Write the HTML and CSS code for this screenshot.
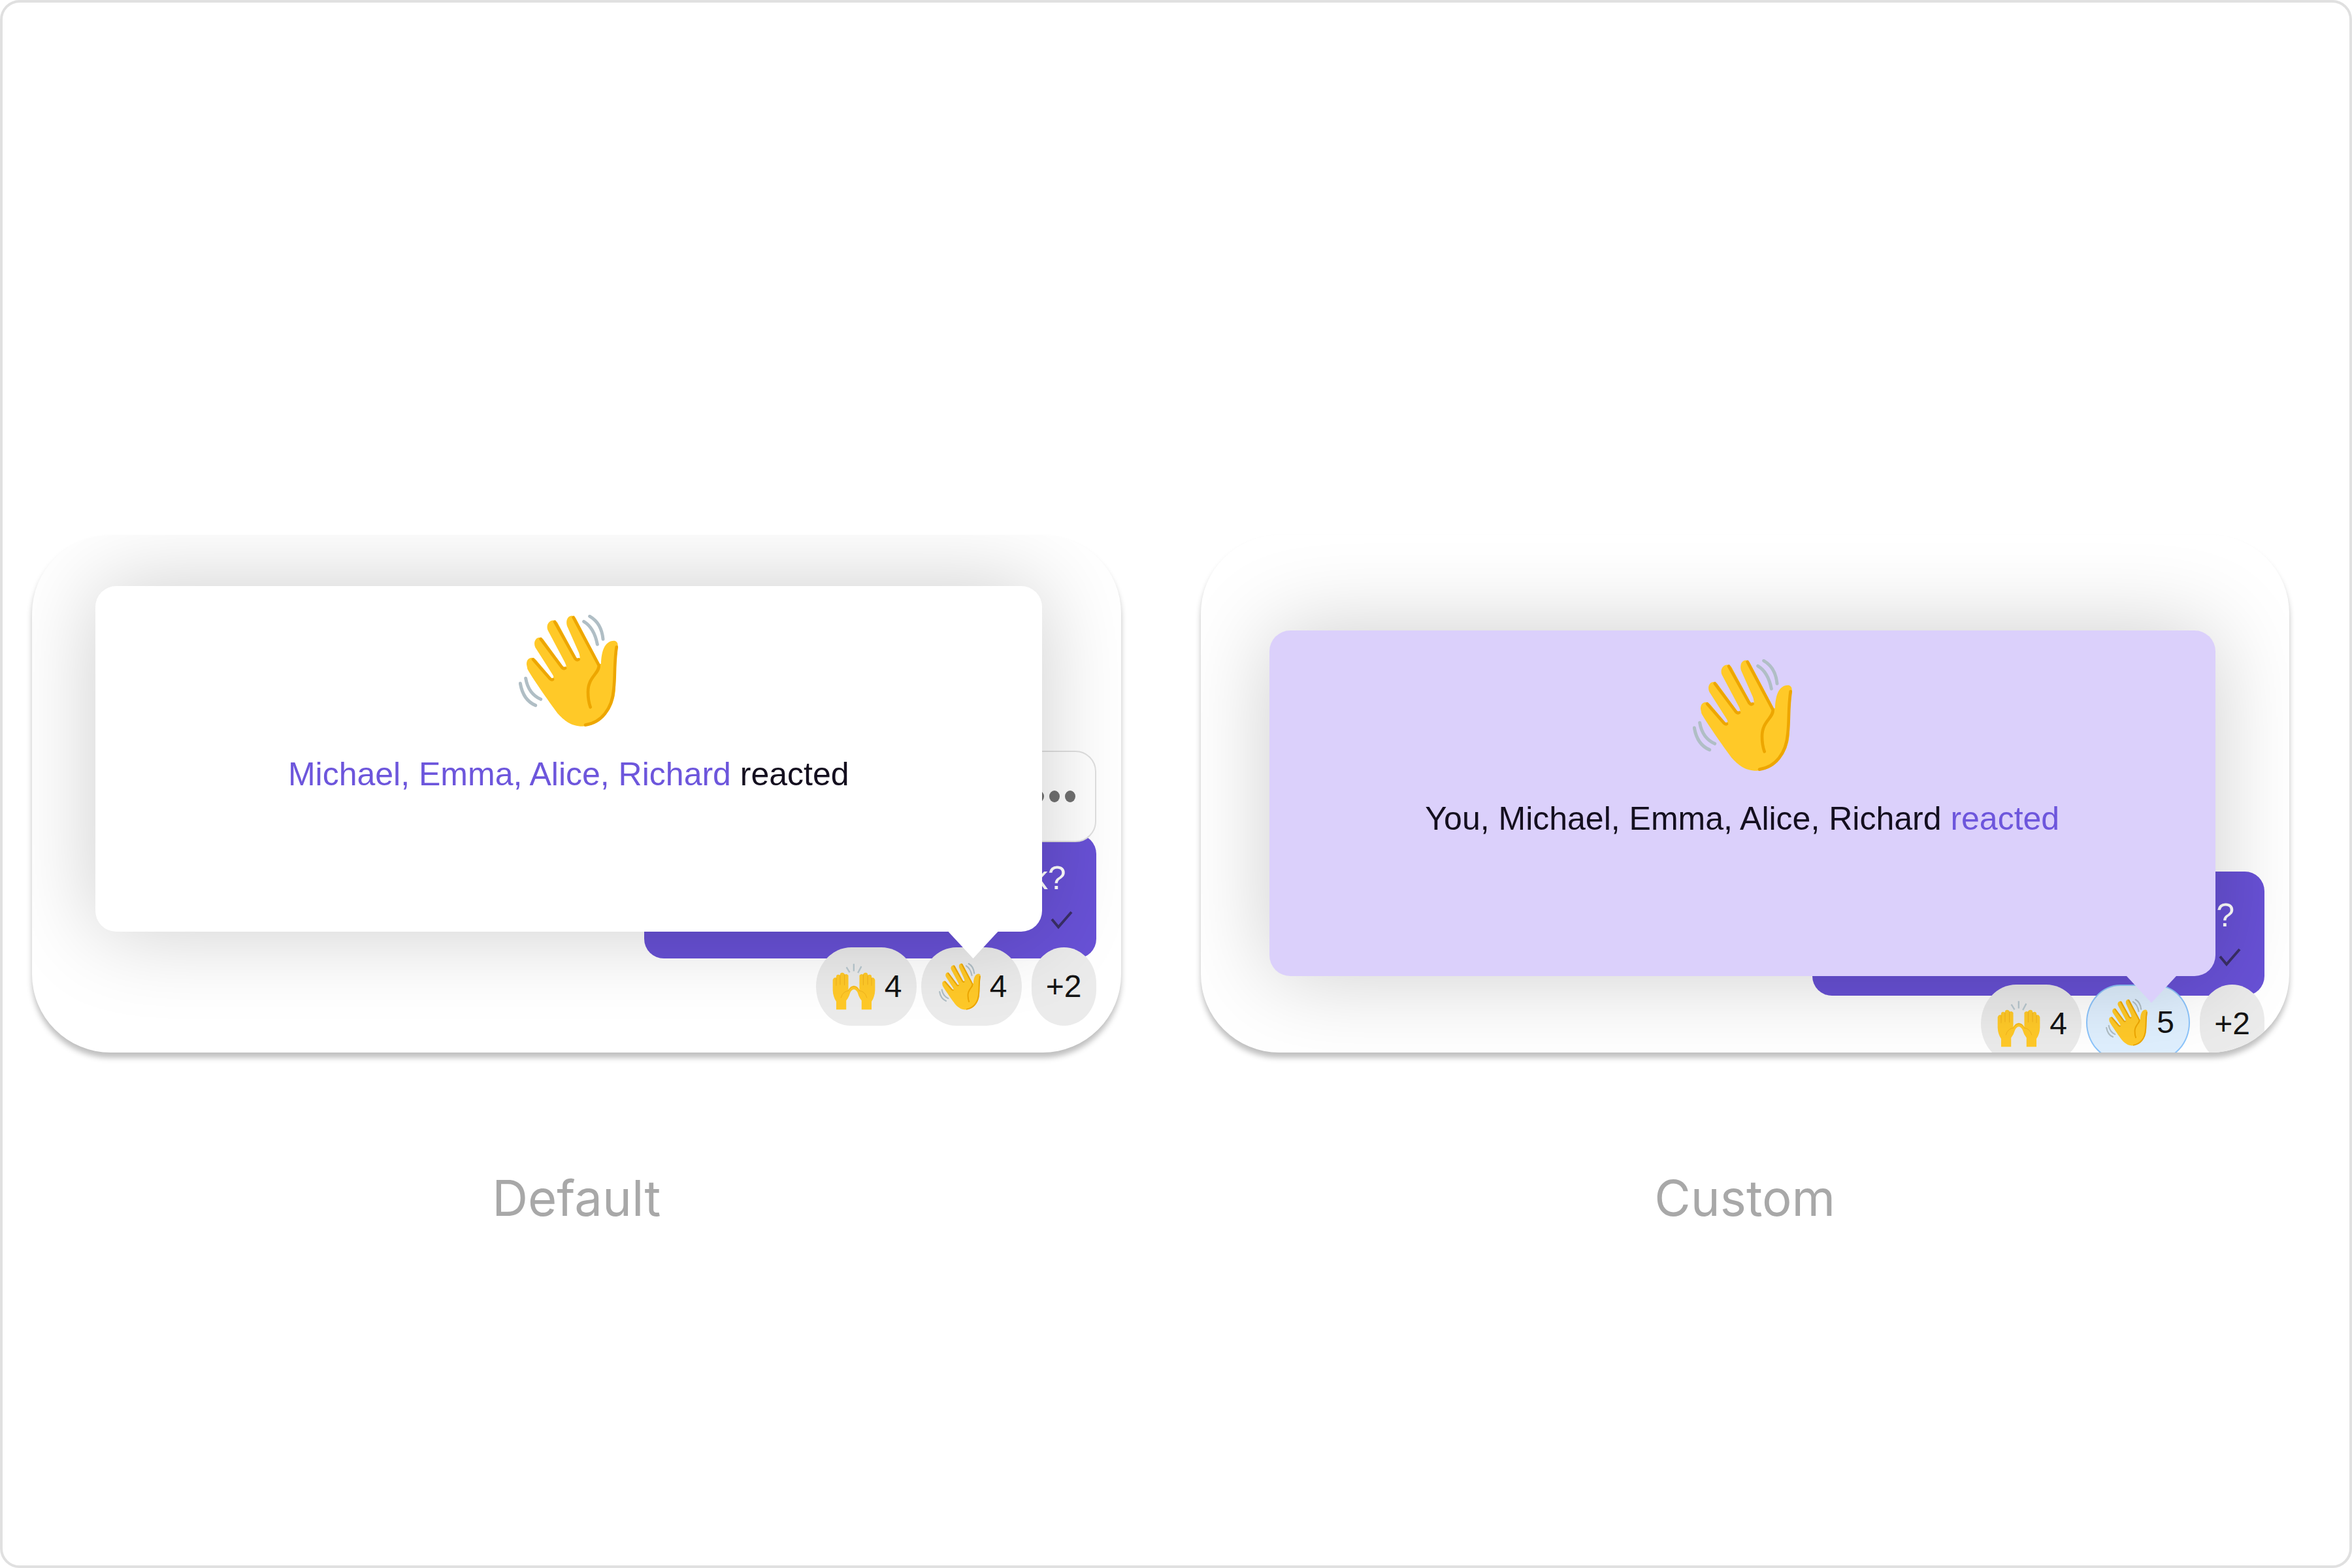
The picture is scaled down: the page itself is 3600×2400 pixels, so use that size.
FILE: index.html
```html
<!DOCTYPE html>
<html lang="en">
<head>
<meta charset="utf-8">
<meta name="viewport" content="width=device-width, initial-scale=1">
<title>Reaction info</title>
<link rel="stylesheet" href="styles.css">
</head>
<body>
<svg class="sprite" aria-hidden="true">
  <symbol id="wave" viewBox="102 66 456 516">
    <path fill="#ffc928" d="M138 294C137 264 164 254 182 274L248 352Q260 366 262 352Q262 346 254 335L178 216C164 186 190 156 214 178L304 302Q316 316 320 302Q318 292 312 281L238 142C218 106 258 74 280 102L368 266Q380 276 383 262Q382 250 378 240L324 118C312 78 346 56 364 82L474 292L480 290C481 240 494 185 540 185C556 187 558 200 557 215C548 270 548 330 546 400C545 506 470 578 395 578C340 578 310 550 280 518C240 464 160 350 142 315Z"/>
    <g fill="none" stroke="#eda600" stroke-width="14" stroke-linecap="round" stroke-linejoin="round">
      <path d="M168 271L244 358Q252 366 258 363"/>
      <path d="M203 177L300 307Q308 316 315 311"/>
      <path d="M267 98L362 268Q369 276 377 271"/>
      <path d="M353 78L470 298C473 335 420 350 420 420Q420 460 431 490"/>
      <path d="M551 214C539 300 546 340 538 408C531 500 480 562 408 572"/>
    </g>
    <g fill="none" stroke="#b0bec5" stroke-width="15" stroke-linecap="round">
      <path d="M109 381Q122 458 179 482"/>
      <path d="M134 358Q146 428 203 454"/>
      <path d="M401 97Q448 125 463 202"/>
      <path d="M428 73Q482 104 489 178"/>
    </g>
  </symbol>
  <symbol id="raised" viewBox="164 165 199 216">
    <g id="raised-hand">
      <path fill="#ffc928" d="M166 242Q172 228 181 233L183 222Q190 214 199 221L201 213Q209 205 219 213L221 218Q230 212 238 222V288Q248 269 264 269V286Q252 288 246 302Q240 324 228 338V379H182V342Q167 320 166 290Z"/>
      <g fill="none" stroke="#f0b11c" stroke-width="3" stroke-linecap="round">
        <path d="M182 234V268M200 222V264M220 218V266"/>
        <path d="M204 324Q212 294 240 292"/>
        <path d="M240 288Q250 272 264 272"/>
      </g>
    </g>
    <use href="#raised-hand" transform="translate(527 0) scale(-1 1)"/>
    <g fill="none" stroke="#b9c8cf" stroke-width="7">
      <path d="M263 168V202M229 184L244 208M298 180L282 210"/>
    </g>
  </symbol>
  <symbol id="check" viewBox="0 0 34 28">
    <path fill="none" stroke="currentColor" stroke-width="4" d="M2 13L12 25L32 2"/>
  </symbol>
</svg>

<main class="board">
  <figure class="example">
    <div class="card">
      <div class="thread">
        <button class="options" type="button" aria-label="Message options">
          <svg viewBox="0 0 64 20" width="64" height="20"><g fill="#717171"><ellipse cx="8" cy="10" rx="8" ry="9"/><ellipse cx="32" cy="10" rx="8" ry="9"/><ellipse cx="56" cy="10" rx="8" ry="9"/></g></svg>
        </button>
        <div class="bubble">
          <p class="bubble-text">k?</p>
          <p class="bubble-meta"><span>PM</span><svg class="check"><use href="#check"/></svg></p>
        </div>
        <div class="reactions">
          <button class="chip" type="button"><svg class="raised"><use href="#raised"/></svg>4</button>
          <button class="chip" type="button"><svg class="wave"><use href="#wave"/></svg>4</button>
          <button class="chip more" type="button">+2</button>
        </div>
      </div>
      <div class="popup" role="tooltip">
        <svg class="popup-emoji"><use href="#wave"/></svg>
        <p class="popup-text"><span class="accent">Michael, Emma, Alice, Richard</span> reacted</p>
      </div>
    </div>
    <figcaption>Default</figcaption>
  </figure>

  <figure class="example custom">
    <div class="card">
      <div class="thread">
        <div class="bubble">
          <p class="bubble-text">?</p>
          <p class="bubble-meta"><svg class="check"><use href="#check"/></svg></p>
        </div>
        <div class="reactions">
          <button class="chip" type="button"><svg class="raised"><use href="#raised"/></svg>4</button>
          <button class="chip mine" type="button"><svg class="wave"><use href="#wave"/></svg>5</button>
          <button class="chip more" type="button">+2</button>
        </div>
      </div>
      <div class="popup" role="tooltip">
        <svg class="popup-emoji"><use href="#wave"/></svg>
        <p class="popup-text">You, Michael, Emma, Alice, Richard <span class="accent">reacted</span></p>
      </div>
    </div>
    <figcaption>Custom</figcaption>
  </figure>
</main>
</body>
</html>
```
FILE: styles.css
```css
* {
  box-sizing: border-box;
}

body,
figure,
p {
  margin: 0;
}

body {
  background: #fff;
  font-family: "Liberation Sans", Arial, sans-serif;
  color: #140f1f;
}

svg {
  display: block;
}

.sprite {
  position: absolute;
  width: 0;
  height: 0;
}

.board {
  display: grid;
  grid-template-columns: 1fr 1fr;
  align-content: start;
  gap: 122px;
  min-height: 100vh;
  padding: 815px 92px 120px 45px;
  border: 4px solid #e0e0e0;
  border-radius: 30px;
}

.example {
  display: flex;
  flex-direction: column;
  gap: 176px;
}

.card {
  position: relative;
  display: flex;
  flex-direction: column;
  justify-content: flex-end;
  min-height: 792px;
  padding: 0 38px 41px;
  border-radius: 120px;
  background: #fff;
  box-shadow: 0 8px 8px rgba(0, 0, 0, 0.25);
  overflow: hidden;
}

.thread {
  display: flex;
  flex-direction: column;
  align-items: flex-end;
}

.options {
  position: relative;
  z-index: 1;
  display: flex;
  align-items: center;
  justify-content: flex-end;
  width: 240px;
  height: 140px;
  margin-bottom: -12px;
  padding: 0 30px;
  border: 2px solid #e0e0e0;
  border-radius: 32px;
  background: #fff;
}

.bubble {
  display: flex;
  flex-direction: column;
  align-items: flex-end;
  width: 692px;
  height: 190px;
  padding: 37px 36px 0;
  border-radius: 30px;
  background: #6851d6;
}

.bubble-text {
  padding-right: 10px;
  font-size: 50px;
  line-height: 60px;
  color: #fff;
}

.bubble-meta {
  display: flex;
  align-items: flex-end;
  gap: 24px;
  height: 60px;
  padding-bottom: 12px;
  font-size: 36px;
  line-height: 28px;
  color: #3a2f66;
}

.check {
  width: 34px;
  height: 28px;
}

.reactions {
  position: relative;
  display: flex;
  align-items: flex-start;
  gap: 7px;
  margin-top: -17px;
}

.chip {
  display: flex;
  align-items: center;
  justify-content: flex-end;
  gap: 14px;
  width: 154px;
  height: 120px;
  padding: 0 22px 0 0;
  border: 0;
  border-radius: 54px / 60px;
  background: #ebebeb;
  font: 48px/60px "Liberation Sans", Arial, sans-serif;
  color: #141414;
}

.raised {
  width: 66px;
  height: 72px;
}

.wave {
  width: 64px;
  height: 72px;
}

.mine {
  width: 159px;
  height: 116px;
  border: 2px solid #8cc4fb;
  background: #dfeffe;
}

.more {
  justify-content: center;
  width: 99px;
  margin-left: 8px;
  padding: 0;
}

.popup {
  position: absolute;
  z-index: 2;
  top: 78px;
  right: 121px;
  left: 97px;
  display: flex;
  flex-direction: column;
  align-items: center;
  gap: 42px;
  min-height: 529px;
  padding-top: 44px;
  border-radius: 32px;
  background: #fff;
  box-shadow: 0 0 138px rgba(0, 0, 0, 0.2);
}

.popup::after {
  content: "";
  position: absolute;
  top: 100%;
  right: 67px;
  width: 76px;
  height: 41px;
  background: inherit;
  clip-path: polygon(0 0, 100% 0, 50% 100%);
}

.popup-emoji {
  width: 152px;
  height: 172px;
}

.popup-text {
  font-size: 50px;
  line-height: 60px;
  white-space: nowrap;
}

.accent {
  color: #6d56dc;
}

.custom .card {
  padding-bottom: 0;
}

.custom .thread {
  margin-bottom: -16px;
}

.custom .popup {
  top: 146px;
  right: 113px;
  left: 105px;
  background: #dbd0fb;
}

.custom .popup::after {
  right: 60px;
}

figcaption {
  font-family: Inter, sans-serif;
  font-size: 76px;
  line-height: 92px;
  text-align: center;
  color: #a8a8a8;
}
```
